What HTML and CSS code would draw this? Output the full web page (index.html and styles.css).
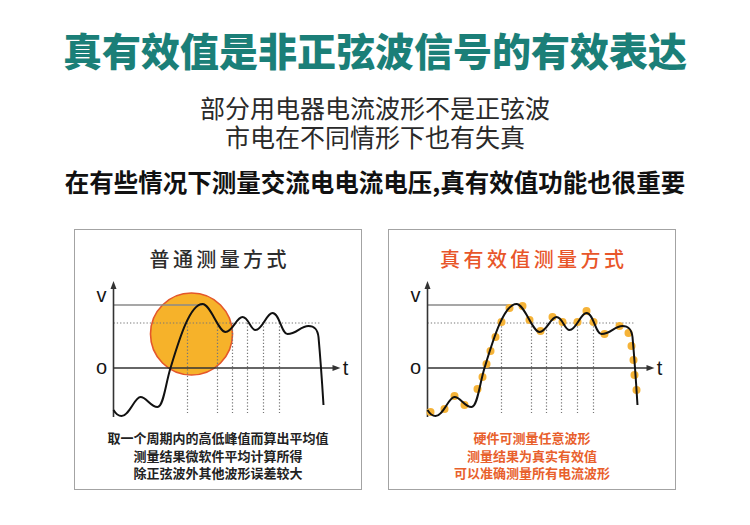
FILE: index.html
```html
<!DOCTYPE html>
<html lang="zh-CN">
<head>
<meta charset="utf-8">
<title>真有效值</title>
<link rel="stylesheet" href="styles.css">
</head>
<body>
<div class="page">
  <h1 class="title">真有效值是非正弦波信号的有效表达</h1>
  <div class="subtitle">
    <div class="sub-line">部分用电器电流波形不是正弦波</div>
    <div class="sub-line">市电在不同情形下也有失真</div>
  </div>
  <p class="tagline">在有些情况下测量交流电电流电压,真有效值功能也很重要</p>

  <div class="cards">
    <div class="card">
      <div class="card-title">普通测量方式</div>
      <svg class="chart" width="285" height="150" viewBox="1.5 0 285 150">
        <circle cx="117" cy="55" r="41" fill="#f6b22a" stroke="#e4572a" stroke-width="1.6"/>
        <line x1="39" y1="26" x2="128" y2="26" stroke="#8a8a8a" stroke-width="1.3"/>
        <line x1="39" y1="44" x2="246" y2="44" stroke="#777" stroke-width="1.2" stroke-dasharray="1.3 2"/>
        <g stroke="#777" stroke-width="1.2" stroke-dasharray="1.3 2">
          <line x1="113" y1="44" x2="113" y2="134"/>
          <line x1="143" y1="44" x2="143" y2="134"/>
          <line x1="158" y1="44" x2="158" y2="134"/>
          <line x1="173" y1="44" x2="173" y2="134"/>
          <line x1="189" y1="44" x2="189" y2="134"/>
          <line x1="205" y1="44" x2="205" y2="134"/>
        </g>
        <line x1="39" y1="8" x2="39" y2="138" stroke="#333" stroke-width="1.6"/>
        <polygon points="39,2 36,10 42,10" fill="#333"/>
        <line x1="39" y1="89" x2="259" y2="89" stroke="#333" stroke-width="1.6"/>
        <polygon points="266,89 258,86 258,92" fill="#333"/>
        <path d="M39,131 C42,136 44,137 47,137 C55,137 60,118 66,118 C72,118 76,128 83,128 C89,128 91,105 96,89 C104,63 115,25 128,25 C136,25 144,53 151,53 C158,53 162,38 168,38 C174,38 176,51 181,51 C188,51 192,34 198,34 C205,34 207,55 213,55 C222,55 226,47 234,47 C240,47 243,50 244,58 C246,80 248,110 249,126" fill="none" stroke="#111" stroke-width="2"/>
        <text class="lbl" x="27" y="23" text-anchor="middle">v</text>
        <text class="lbl" x="27" y="95" text-anchor="middle">o</text>
        <text class="lbl" x="271" y="96" text-anchor="middle">t</text>
      </svg>
      <div class="note">取一个周期内的高低峰值而算出平均值<br>测量结果微软件平均计算所得<br>除正弦波外其他波形误差较大</div>
    </div>

    <div class="card">
      <div class="card-title accent">真有效值测量方式</div>
      <svg class="chart" width="285" height="150" viewBox="1.5 0 285 150">
        <line x1="39" y1="26" x2="124" y2="26" stroke="#8a8a8a" stroke-width="1.3"/>
        <line x1="39" y1="44" x2="246" y2="44" stroke="#777" stroke-width="1.2" stroke-dasharray="1.3 2"/>
        <g stroke="#777" stroke-width="1.2" stroke-dasharray="1.3 2">
          <line x1="113" y1="44" x2="113" y2="134"/>
          <line x1="143" y1="44" x2="143" y2="134"/>
          <line x1="158" y1="44" x2="158" y2="134"/>
          <line x1="173" y1="44" x2="173" y2="134"/>
          <line x1="189" y1="44" x2="189" y2="134"/>
          <line x1="205" y1="44" x2="205" y2="134"/>
        </g>
        <line x1="39" y1="8" x2="39" y2="138" stroke="#333" stroke-width="1.6"/>
        <polygon points="39,2 36,10 42,10" fill="#333"/>
        <line x1="39" y1="89" x2="259" y2="89" stroke="#333" stroke-width="1.6"/>
        <polygon points="266,89 258,86 258,92" fill="#333"/>
        <g fill="#f5b338">
          <circle cx="42" cy="133" r="4"/>
          <circle cx="56" cy="130" r="4"/>
          <circle cx="66" cy="117" r="4"/>
          <circle cx="76" cy="126" r="4"/>
          <circle cx="89" cy="110" r="4"/>
          <circle cx="94" cy="98" r="4"/>
          <circle cx="98" cy="85" r="4"/>
          <circle cx="102" cy="72" r="4"/>
          <circle cx="107" cy="58" r="4"/>
          <circle cx="113" cy="43" r="4"/>
          <circle cx="121" cy="29" r="4"/>
          <circle cx="134" cy="27" r="4"/>
          <circle cx="141" cy="41" r="4"/>
          <circle cx="152" cy="52" r="4"/>
          <circle cx="164" cy="38" r="4"/>
          <circle cx="174" cy="43" r="4"/>
          <circle cx="189" cy="43" r="4"/>
          <circle cx="198" cy="32" r="4"/>
          <circle cx="205" cy="43" r="4"/>
          <circle cx="216" cy="55" r="4"/>
          <circle cx="231" cy="47" r="4"/>
          <circle cx="240" cy="54" r="4"/>
          <circle cx="243" cy="67" r="4"/>
          <circle cx="245" cy="81" r="4"/>
          <circle cx="246" cy="96" r="4"/>
          <circle cx="248" cy="111" r="4"/>
        </g>
        <path d="M39,131 C42,136 44,137 47,137 C55,137 60,118 66,118 C72,118 76,128 83,128 C89,128 91,105 96,89 C104,63 115,25 128,25 C136,25 144,53 151,53 C158,53 162,38 168,38 C174,38 176,51 181,51 C188,51 192,34 198,34 C205,34 207,55 213,55 C222,55 226,47 234,47 C240,47 243,50 244,58 C246,80 248,110 249,126" fill="none" stroke="#111" stroke-width="2"/>
        <text class="lbl" x="27" y="23" text-anchor="middle">v</text>
        <text class="lbl" x="27" y="95" text-anchor="middle">o</text>
        <text class="lbl" x="271" y="96" text-anchor="middle">t</text>
      </svg>
      <div class="note accent">硬件可测量任意波形<br>测量结果为真实有效值<br>可以准确测量所有电流波形</div>
    </div>
  </div>
</div>
</body>
</html>
```

FILE: styles.css
```css
html, body {
  margin: 0;
  padding: 0;
  background: #ffffff;
}

body {
  font-family: "Noto Sans CJK SC", "Noto Sans", sans-serif;
  color: #222;
}

.page {
  width: 750px;
  height: 525px;
  display: flex;
  flex-direction: column;
  align-items: center;
  overflow: hidden;
}

.title {
  margin: 26px 0 0;
  font-size: 39px;
  line-height: 47px;
  font-weight: 900;
  color: #1b7f78;
  letter-spacing: 0;
  text-align: center;
}

.subtitle {
  margin: 19.5px 0 0;
  display: flex;
  flex-direction: column;
  align-items: center;
}

.sub-line {
  height: 29px;
  font-size: 25px;
  line-height: 29px;
  font-weight: 400;
  color: #2a2a2a;
  text-align: center;
}

.tagline {
  margin: 16.5px 0 0;
  font-size: 24.5px;
  line-height: 30px;
  font-weight: 700;
  color: #111;
  text-align: center;
}

.cards {
  margin-top: 32px;
  display: flex;
  gap: 26px;
}

.card {
  box-sizing: border-box;
  width: 288px;
  height: 261px;
  border: 1.5px solid #a3a3a3;
  padding-top: 17px;
  display: flex;
  flex-direction: column;
  align-items: center;
}

.card-title {
  font-size: 20px;
  line-height: 24px;
  letter-spacing: 3.4px;
  margin-right: -3.4px;
  font-weight: 500;
  color: #2c2c2c;
}

.card-title.accent {
  color: #e8562a;
}

.chart {
  display: block;
  margin-top: 8px;
}

.lbl {
  font-family: "Liberation Sans", Arial, sans-serif;
  font-size: 20px;
  fill: #151515;
}

.note {
  margin-top: 0;
  font-size: 13px;
  line-height: 17.5px;
  font-weight: 700;
  color: #222;
  text-align: center;
}

.note.accent {
  color: #e8602c;
}
```
